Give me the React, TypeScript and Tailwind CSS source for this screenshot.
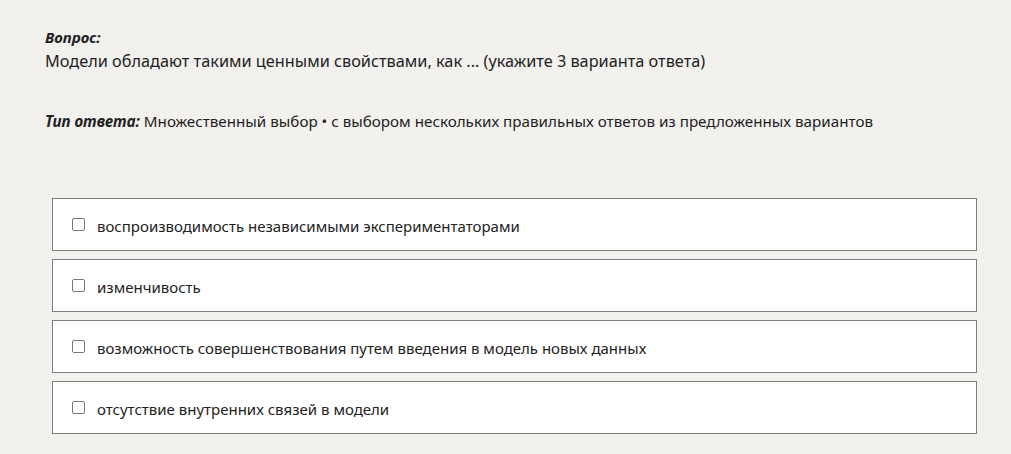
export default function App() {
  const options = [
    'воспроизводимость независимыми экспериментаторами',
    'изменчивость',
    'возможность совершенствования путем введения в модель новых данных',
    'отсутствие внутренних связей в модели',
  ];

  return (
    <div
      className="min-h-[454px] w-full bg-[#f2f1ee] text-[#222] pt-[27px] pl-[45px] pr-[34px]"
      style={{ fontFamily: '"Noto Sans", "Open Sans", sans-serif' }}
    >
      <p className="text-[15px] font-bold italic leading-[20px]">Вопрос:</p>
      <p className="text-[16.3px] leading-[24px] mt-[2px]">
        Модели обладают такими ценными свойствами, как ... (укажите 3 варианта ответа)
      </p>

      <p className="text-[15.2px] leading-[20px] mt-[38px]">
        <span className="font-bold italic">Тип ответа:</span> Множественный выбор • с выбором нескольких правильных ответов из предложенных вариантов
      </p>

      <div className="mt-[67px] ml-[7px] flex flex-col gap-[8px]">
        {options.map((o) => (
          <label
            key={o}
            className="flex items-center h-[53px] bg-white border border-[#7e7e7e] pl-[19px] cursor-pointer"
          >
            <input
              type="checkbox"
              className="w-[13px] h-[13px] m-0 appearance-none border border-[#767676] rounded-[2px] bg-white"
            />
            <span className="ml-[12px] pt-[3px] text-[15px] text-[#222]">{o}</span>
          </label>
        ))}
      </div>
    </div>
  );
}
